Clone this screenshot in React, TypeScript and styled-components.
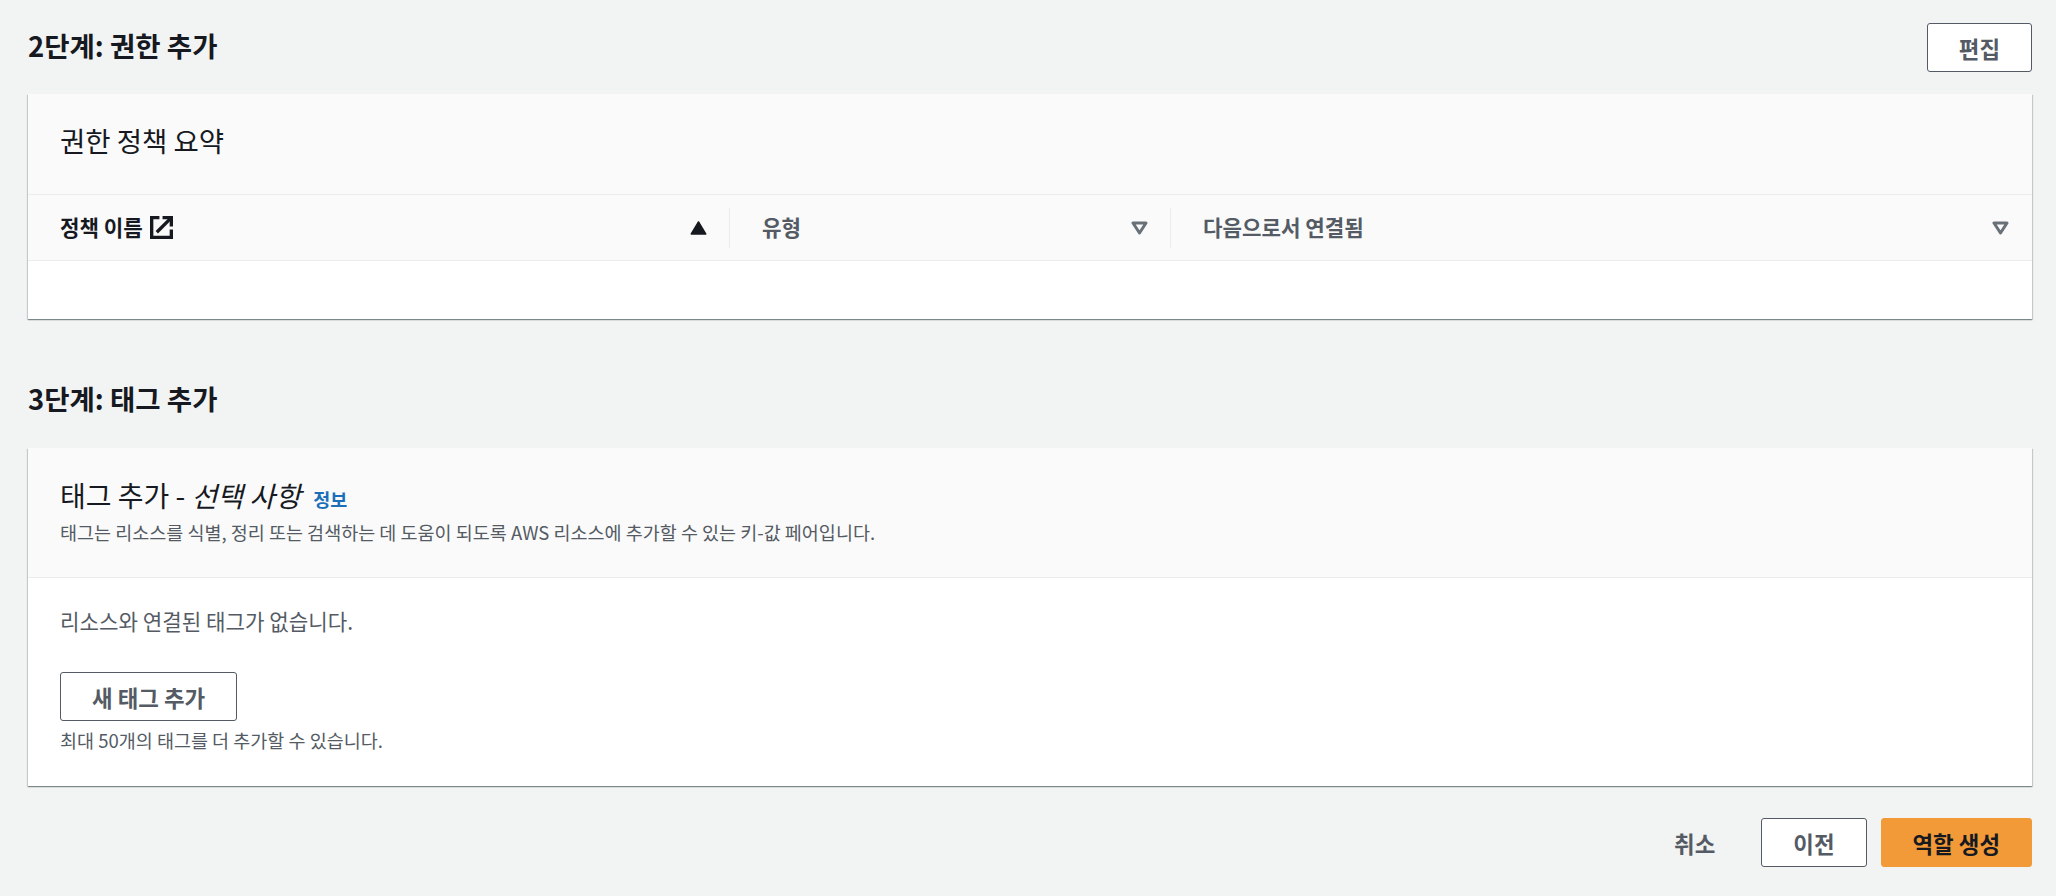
import { ReactElement } from 'react';
import styled, { createGlobalStyle } from 'styled-components';

const GlobalStyle = createGlobalStyle`
html, body {
    margin: 0;
    padding: 0;
    background: #f2f3f3;
}
body {
    font-family: "Noto Sans CJK KR", "Noto Sans", sans-serif;
    color: #16191f;
}
`;

const columns = [
    { label: '정책 이름', active: true, external: true },
    { label: '유형', active: false, external: false },
    { label: '다음으로서 연결됨', active: false, external: false },
];

const ExternalIcon = (): ReactElement => (
    <ExternalSvg viewBox="0 0 22 22" fill="none" stroke="#16191f" strokeWidth="3.200">
        <path d="M9 1.600H1.600V20.400H20.400V13" />
        <path d="M6.500 15.500 19.500 2.500" />
        <path d="M12 1.600H20.400V10" />
    </ExternalSvg>
);

const SortIcon = ({ active }: { active: boolean }): ReactElement => (
    <SortSvg viewBox="0 0 17 14">
        {active
            ? <path d="M8.500 1 15.700 13H1.300Z" fill="#16191f" stroke="#16191f" strokeWidth="1.500" strokeLinejoin="round" />
            : <path d="M2 2H15L8.500 12Z" fill="none" stroke="#687078" strokeWidth="3" strokeLinejoin="round" />}
    </SortSvg>
);

export default function App(): ReactElement {
    return (
        <Page>
            <GlobalStyle />
            <SectionHead>
                <Heading>2단계: 권한 추가</Heading>
                <OutlineButton>편집</OutlineButton>
            </SectionHead>
            <Card>
                <PolicyHeader>
                    <CardTitle>권한 정책 요약</CardTitle>
                </PolicyHeader>
                <TableHeadRow>
                    {columns.map(col => (
                        <HeadCell key={col.label}>
                            <HeadLabel $active={col.active}>
                                {col.label}
                                {col.external && <ExternalIcon />}
                            </HeadLabel>
                            <SortIcon active={col.active} />
                        </HeadCell>
                    ))}
                </TableHeadRow>
                <EmptyRow />
            </Card>

            <TagsHead>
                <Heading>3단계: 태그 추가</Heading>
            </TagsHead>
            <Card>
                <TagHeader>
                    <TagTitle>
                        태그 추가 - <em>선택 사항</em> <InfoLink>정보</InfoLink>
                    </TagTitle>
                    <Description>태그는 리소스를 식별, 정리 또는 검색하는 데 도움이 되도록 AWS 리소스에 추가할 수 있는 키-값 페어입니다.</Description>
                </TagHeader>
                <TagBody>
                    <EmptyText>리소스와 연결된 태그가 없습니다.</EmptyText>
                    <OutlineButton>새 태그 추가</OutlineButton>
                    <Hint>최대 50개의 태그를 더 추가할 수 있습니다.</Hint>
                </TagBody>
            </Card>

            <Footer>
                <TextButton>취소</TextButton>
                <OutlineButton>이전</OutlineButton>
                <PrimaryButton>역할 생성</PrimaryButton>
            </Footer>
        </Page>
    );
}

const Page = styled.div`
    box-sizing: border-box;
    height: 896px;
    padding: 23px 24px 0 28px;
    overflow: hidden;
`;

const SectionHead = styled.div`
    display: flex;
    justify-content: space-between;
    align-items: center;
    margin-bottom: 22px;
`;

const TagsHead = styled(SectionHead)`
    margin-top: 57px;
    height: 48px;
    margin-bottom: 24px;
`;

const Heading = styled.h2`
    margin: 0;
    padding-bottom: 5px;
    font-size: 27.500px;
    line-height: 32px;
    font-weight: 700;
`;

const Card = styled.div`
    background: #fff;
    box-shadow: 0 1px 1px 0 rgba(0, 28, 36, 0.3), 1px 1px 1px 0 rgba(0, 28, 36, 0.15), -1px 1px 1px 0 rgba(0, 28, 36, 0.15);
`;

const PolicyHeader = styled.div`
    box-sizing: border-box;
    height: 101px;
    padding: 27px 32px 0;
    background: #fafafa;
    border-bottom: 1px solid #eaeded;
`;

const CardTitle = styled.h3`
    margin: 0;
    font-size: 27.500px;
    line-height: 38px;
    font-weight: 400;
`;

const TagTitle = styled(CardTitle)`
    font-size: 28px;

    em {
        font-style: italic;
    }
`;

const TableHeadRow = styled.div`
    box-sizing: border-box;
    display: grid;
    grid-template-columns: 702px 441px 1fr;
    align-items: center;
    height: 66px;
    background: #fafafa;
    border-bottom: 1px solid #eaeded;
`;

const HeadCell = styled.div`
    box-sizing: border-box;
    display: flex;
    justify-content: space-between;
    align-items: center;
    height: 40px;
    padding: 0 22px 0 32px;
    border-right: 1px solid #eaeded;

    &:last-child {
        border-right: none;
        padding-right: 23px;
    }
`;

const HeadLabel = styled.span<{ $active: boolean }>`
    display: flex;
    align-items: center;
    gap: 7px;
    padding-bottom: 2px;
    font-size: 21.200px;
    font-weight: 700;
    color: ${props => (props.$active ? '#16191f' : '#545b64')};
`;

const ExternalSvg = styled.svg`
    width: 23px;
    height: 23px;
    margin-top: 2px;
`;

const SortSvg = styled.svg`
    width: 17px;
    height: 14px;
`;

const EmptyRow = styled.div`
    height: 58px;
`;

const TagHeader = styled.div`
    box-sizing: border-box;
    height: 130px;
    padding: 28px 32px 0;
    background: #fafafa;
    border-bottom: 1px solid #eaeded;
`;

const InfoLink = styled.a`
    font-size: 18.500px;
    font-weight: 700;
    color: #1a6fb8;
    margin-left: 6px;
`;

const Description = styled.p`
    margin: 2px 0 0;
    font-size: 18.500px;
    line-height: 24px;
    color: #545b64;
`;

const TagBody = styled.div`
    box-sizing: border-box;
    height: 208px;
    padding: 27px 32px 0;
    display: flex;
    flex-direction: column;
    align-items: flex-start;
`;

const EmptyText = styled.div`
    font-size: 21.200px;
    line-height: 32px;
    color: #545b64;
    margin-bottom: 35px;
`;

const Hint = styled.div`
    margin-top: 7px;
    font-size: 18.500px;
    line-height: 24px;
    color: #545b64;
`;

const OutlineButton = styled.button`
    box-sizing: border-box;
    height: 49px;
    padding: 0 31px;
    background: #fff;
    border: 1px solid #545b64;
    border-radius: 3px;
    color: #545b64;
    font-family: inherit;
    font-size: 22.400px;
    font-weight: 700;
`;

const Footer = styled.div`
    display: flex;
    justify-content: flex-end;
    align-items: center;
    gap: 14px;
    margin-top: 32px;
`;

const TextButton = styled(OutlineButton)`
    background: transparent;
    border-color: transparent;
`;

const PrimaryButton = styled(OutlineButton)`
    background: #f29a38;
    border-color: #f29a38;
    color: #16191f;
`;
